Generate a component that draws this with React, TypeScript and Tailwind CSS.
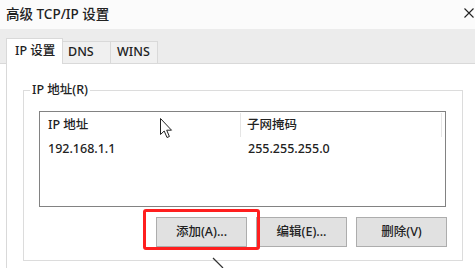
import React from "react";

const font = "font-['Noto_Sans','Noto_Sans_CJK_SC',sans-serif] font-medium";

function Btn({ label }: { label: string }) {
  return (
    <div className="w-[91px] h-[30px] flex items-center justify-center bg-[#e1e1e1] border border-[#adadad] text-[12.5px] text-[#222]">
      {label}
    </div>
  );
}

export default function App() {
  return (
    <div className={`w-[475px] h-[268px] overflow-hidden relative bg-white ${font}`}>
      {/* title bar */}
      <div className="h-[29px] flex items-center justify-between pl-[6px] pr-[1px] bg-[#fbfbfb]">
        <span className="text-[13.5px] text-[#222]">高级 TCP/IP 设置</span>
        <svg width="10" height="10" viewBox="0 0 10 10" className="mt-[-4px]">
          <path d="M0.5 0.5 L9.5 9.5 M9.5 0.5 L0.5 9.5" stroke="#222" strokeWidth="1.1" />
        </svg>
      </div>
      {/* tab strip */}
      <div className="h-[35px] bg-[#ececec] border-b border-[#d9d9d9] flex items-end pl-[6px]">
        <div className="h-[26px] -mb-px pl-[8px] bg-white border border-b-0 border-[#d9d9d9] flex items-center text-[12.5px] text-[#222] w-[57px]">
          IP 设置
        </div>
        <div className="h-[22px] w-[48px] pl-[5px] bg-[#f0f0f0] border border-l-0 border-b-0 border-[#d9d9d9] flex items-center text-[12.5px] text-[#222]">
          DNS
        </div>
        <div className="h-[22px] w-[47px] pl-[6px] bg-[#f0f0f0] border border-l-0 border-b-0 border-[#d9d9d9] flex items-center text-[12.5px] text-[#222]">
          WINS
        </div>
      </div>
      {/* content panel */}
      <div className="ml-[6px] border-l border-[#d9d9d9] h-[300px] pt-[26px]">
        <div className="relative ml-[16px] w-[440px] h-[171px] border border-[#dcdcdc]">
          <span className="absolute left-[6px] top-[-10px] bg-white px-[2px] text-[12.5px] text-[#222] leading-[18px]">
            IP 地址(R)
          </span>
          <div className="ml-[15px] mt-[20px] w-[407px] h-[96px] border border-[#828282] bg-white">
            <div className="h-[26px] flex items-stretch text-[12.5px] text-[#222]">
              <div className="w-[201px] pl-[8px] flex items-center border-r border-[#e5e5e5] my-[1px]">IP 地址</div>
              <div className="w-[201px] pl-[6px] flex items-center border-r border-[#e5e5e5] my-[1px]">子网掩码</div>
            </div>
            <div className="h-[22px] flex items-center text-[12.5px] text-[#222]">
              <div className="w-[201px] pl-[8px]">192.168.1.1</div>
              <div className="pl-[7px]">255.255.255.0</div>
            </div>
          </div>
          <div className="ml-[15px] mt-[10px] w-[408px] flex justify-end gap-[9px]">
            <div className="relative">
              <Btn label="添加(A)..." />
              <div className="absolute left-[-13px] top-[-8px] w-[117px] h-[41px] border-[3px] border-[#ff1f1f] rounded-[3px]" />
            </div>
            <Btn label="编辑(E)..." />
            <Btn label="删除(V)" />
          </div>
        </div>
      </div>
      {/* mouse cursor */}
      <svg className="absolute left-[160px] top-[118px]" width="13" height="21" viewBox="0 0 13 21">
        <path d="M0.5 0.5 L0.5 16.5 L4.2 13 L7 19.5 L9.4 18.5 L6.7 12.2 L11.5 12.2 Z" fill="#fff" stroke="#222" strokeWidth="1" strokeLinejoin="round" />
      </svg>
      {/* partial pointer at bottom */}
      <svg className="absolute left-[211px] top-[256px]" width="14" height="12" viewBox="0 0 14 12">
        <path d="M2 2 L12 12" stroke="#333" strokeWidth="1.2" />
      </svg>
    </div>
  );
}
